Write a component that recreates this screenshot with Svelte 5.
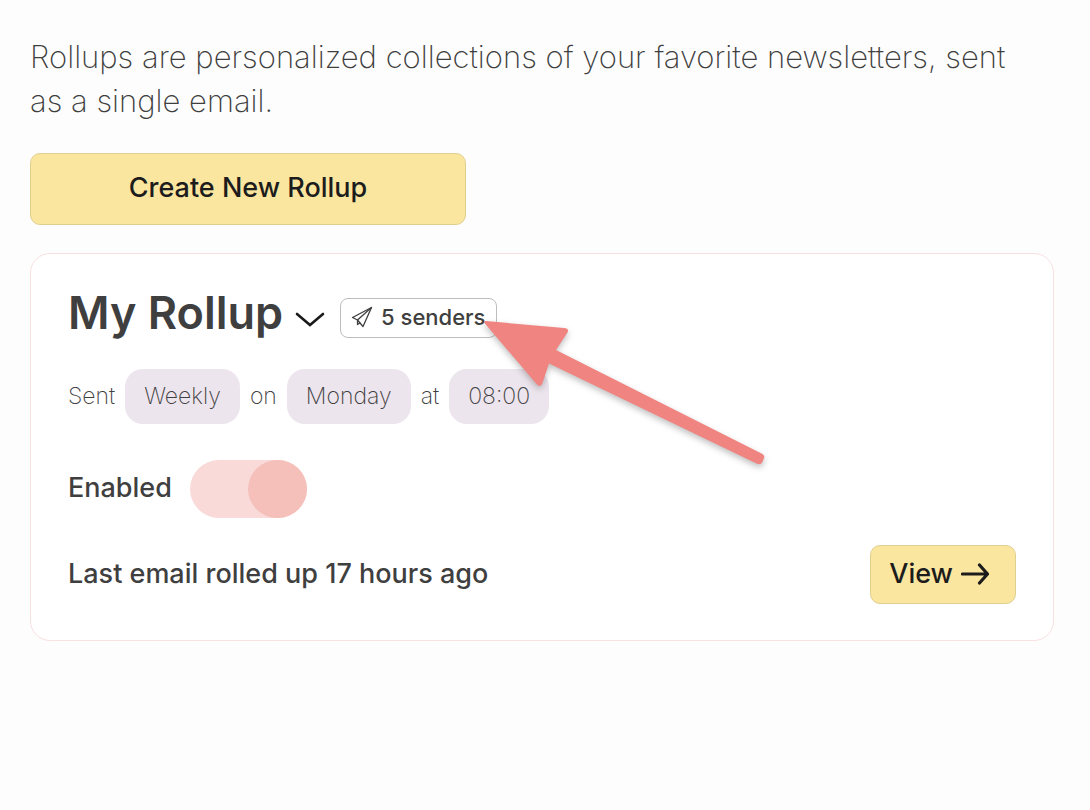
<script>
  let frequency = $state('Weekly');
  let day = $state('Monday');
  let time = $state('08:00');
  let enabled = $state(true);
</script>

<main>
  <p class="intro">
    Rollups are personalized collections of your favorite newsletters, sent as a single email.
  </p>

  <button class="primary create" type="button">Create New Rollup</button>

  <section class="card">
    <header>
      <h1>
        <button class="title" type="button">
          My Rollup
          <svg width="30" height="18" viewBox="0 0 30 18" aria-hidden="true">
            <path d="M2 3 L15 14 L28 3" fill="none" stroke="#1a1a1a" stroke-width="2.6" stroke-linecap="round" stroke-linejoin="miter" />
          </svg>
        </button>
      </h1>
      <button class="senders" type="button">
        <svg width="22" height="22" viewBox="0 0 22 22" aria-hidden="true">
          <g fill="none" stroke="#3f3f3f" stroke-width="1.3" stroke-linejoin="round" stroke-linecap="round">
            <path d="M20.5 1.5 L1.500 11.5 L6.5 14 L12 20.5 Z" />
            <path d="M20.5 1.5 L6.5 14 V18.5 L9 17" />
          </g>
        </svg>
        5 senders
      </button>
    </header>

    <div class="schedule">
      <label for="frequency">Sent</label>
      <select id="frequency" bind:value={frequency}>
        <option>Weekly</option>
        <option>Daily</option>
      </select>
      <label for="day">on</label>
      <select id="day" bind:value={day}>
        <option>Monday</option>
        <option>Friday</option>
      </select>
      <label for="time">at</label>
      <select id="time" bind:value={time}>
        <option>08:00</option>
        <option>18:00</option>
      </select>
    </div>

    <div class="enabled">
      <label for="enabled">Enabled</label>
      <input id="enabled" type="checkbox" role="switch" bind:checked={enabled} />
    </div>

    <footer>
      <span>Last email rolled up 17 hours ago</span>
      <a class="primary view" href="#view">
        View
        <svg width="28" height="22" viewBox="0 0 28 22" aria-hidden="true">
          <path d="M1.5 11 H26 M18.5 2 L26.5 11 L18.5 20" fill="none" stroke="#1c1c1c" stroke-width="3.2" stroke-linecap="round" stroke-linejoin="round" />
        </svg>
      </a>
    </footer>

    <svg class="pointer" width="300" height="160" viewBox="0 0 300 160" aria-hidden="true">
      <path
        d="M4.5 12 Q3 10 6 10.1 L84 17 Q89.5 17.5 87.5 21.5 L76 39 L282.5 143 Q285 144.5 284 147 L282.5 151 Q280.5 154.5 276.5 152.5 L69 52.5 L62.5 72 Q60.5 77.5 56.5 73 Z"
        fill="#f08480"
      />
    </svg>
  </section>
</main>

<style>
  :global(body) {
    margin: 0;
    background: #fdfdfd;
  }

  main {
    padding: 35px 36px 35px 30px;
    color: #3f3f3f;
    font-family: Inter, "Liberation Sans", sans-serif;
  }

  .intro {
    margin: 0 0 30px;
    padding-right: 20px;
    font-size: 31px;
    font-weight: 200;
    line-height: 44px;
  }

  button,
  select {
    font-family: inherit;
    color: inherit;
    cursor: pointer;
  }

  .primary {
    box-sizing: border-box;
    border: 1px solid #dfd092;
    border-radius: 10px;
    background: #fbe69f;
    color: #1c1c1c;
    font-size: 27px;
    font-weight: 500;
    text-decoration: none;
  }

  .create {
    display: block;
    width: 436px;
    max-width: 100%;
    height: 72px;
    margin-bottom: 28px;
    padding: 0 0 4px;
  }

  .card {
    position: relative;
    border: 1px solid #f9e1e2;
    border-radius: 20px;
    background: #fff;
    padding: 44px 37px 36px;
  }

  header {
    display: flex;
    align-items: center;
    gap: 15px;
    height: 40px;
    margin-bottom: 31px;
  }

  h1 {
    margin: 0;
  }

  .title {
    display: flex;
    align-items: center;
    gap: 12px;
    padding: 0 0 10px;
    border: 0;
    background: none;
    font-size: 45px;
    font-weight: 600;
    line-height: 48px;
  }

  .title svg {
    margin-top: 14px;
  }

  .senders {
    display: flex;
    align-items: center;
    gap: 8px;
    height: 40px;
    padding: 0 11px 2px 10px;
    border: 1px solid #bdbdbd;
    border-radius: 8px;
    background: #fff;
    font-size: 22px;
    font-weight: 500;
  }

  .schedule {
    display: flex;
    align-items: center;
    gap: 10px;
    margin-bottom: 36px;
    font-size: 23px;
    font-weight: 200;
  }

  .schedule label {
    padding-bottom: 1px;
  }

  .enabled label,
  footer span {
    padding-bottom: 3px;
  }

  select {
    appearance: none;
    field-sizing: content;
    height: 55px;
    padding: 0 19px 2px;
    border: 0;
    border-radius: 18px;
    background: #ede5ed;
    font-size: 23px;
    font-weight: 200;
  }

  .enabled {
    display: flex;
    align-items: center;
    gap: 18px;
    margin-bottom: 27px;
    font-size: 27px;
    font-weight: 500;
  }

  .enabled input {
    appearance: none;
    display: flex;
    width: 117px;
    height: 58px;
    margin: 0;
    border-radius: 29px;
    background: #f9dad8;
    cursor: pointer;
  }

  .enabled input::before {
    content: "";
    width: 59px;
    height: 58px;
    border-radius: 50%;
    background: #f5bfba;
  }

  .enabled input:checked {
    justify-content: flex-end;
  }

  footer {
    display: flex;
    align-items: center;
    justify-content: space-between;
    font-size: 27px;
    font-weight: 500;
  }

  .view {
    display: flex;
    align-items: center;
    gap: 8px;
    height: 59px;
    padding: 0 26px 2px 18px;
  }

  .pointer {
    position: absolute;
    left: 449px;
    top: 57px;
    pointer-events: none;
    filter: drop-shadow(0 3px 3px rgb(0 0 0 / 0.25));
  }
</style>
